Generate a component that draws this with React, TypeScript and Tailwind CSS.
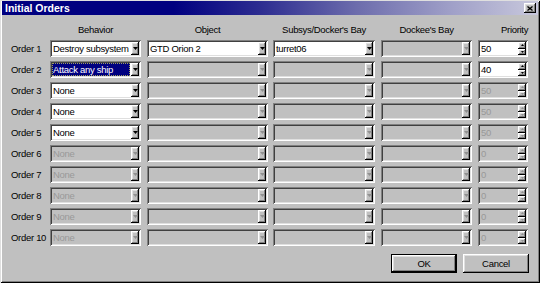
import React from 'react';

// classic 3D bevels
const raised =
  'shadow-[inset_-1px_-1px_#000,inset_1px_1px_#fff,inset_-2px_-2px_#808080,inset_2px_2px_#dfdfdf]';
const sunken =
  'shadow-[inset_1px_1px_#808080,inset_-1px_-1px_#fff,inset_2px_2px_#404040,inset_-2px_-2px_#dfdfdf]';

interface Order {
  behavior: string;
  behaviorOn: boolean;
  object: string;
  objectOn: boolean;
  subsys: string;
  subsysOn: boolean;
  priority: string;
  priorityOn: boolean;
  selected?: boolean;
}

const orders: Order[] = [
  { behavior: 'Destroy subsystem', behaviorOn: true, object: 'GTD Orion 2', objectOn: true, subsys: 'turret06', subsysOn: true, priority: '50', priorityOn: true },
  { behavior: 'Attack any ship', behaviorOn: true, object: '', objectOn: false, subsys: '', subsysOn: false, priority: '40', priorityOn: true, selected: true },
  { behavior: 'None', behaviorOn: true, object: '', objectOn: false, subsys: '', subsysOn: false, priority: '50', priorityOn: false },
  { behavior: 'None', behaviorOn: true, object: '', objectOn: false, subsys: '', subsysOn: false, priority: '50', priorityOn: false },
  { behavior: 'None', behaviorOn: true, object: '', objectOn: false, subsys: '', subsysOn: false, priority: '50', priorityOn: false },
  { behavior: 'None', behaviorOn: false, object: '', objectOn: false, subsys: '', subsysOn: false, priority: '0', priorityOn: false },
  { behavior: 'None', behaviorOn: false, object: '', objectOn: false, subsys: '', subsysOn: false, priority: '0', priorityOn: false },
  { behavior: 'None', behaviorOn: false, object: '', objectOn: false, subsys: '', subsysOn: false, priority: '0', priorityOn: false },
  { behavior: 'None', behaviorOn: false, object: '', objectOn: false, subsys: '', subsysOn: false, priority: '0', priorityOn: false },
  { behavior: 'None', behaviorOn: false, object: '', objectOn: false, subsys: '', subsysOn: false, priority: '0', priorityOn: false },
];

const Arrow: React.FC<{ dir: 'up' | 'down'; on: boolean; size?: number }> = ({ dir, on, size = 5 }) => {
  const h = Math.ceil(size / 2);
  const pts = dir === 'down' ? `0,0 ${size},0 ${size / 2},${h}` : `0,${h} ${size},${h} ${size / 2},0`;
  return (
    <svg width={size} height={h} viewBox={`0 0 ${size} ${h}`} className="block">
      <polygon points={pts} fill={on ? '#000' : '#909090'} />
    </svg>
  );
};

const DropButton: React.FC<{ on: boolean }> = ({ on }) => (
  <div className={`w-[8px] h-full shrink-0 bg-[#c0c0c0] flex items-center justify-center ${raised}`}>
    <Arrow dir="down" on={on} />
  </div>
);

const Combo: React.FC<{ width: string; value: string; on: boolean; selected?: boolean }> = ({
  width,
  value,
  on,
  selected,
}) => (
  <div className={`${width} h-[17px] shrink-0 flex p-[2px] ${on ? 'bg-white' : 'bg-[#c0c0c0]'} ${sunken}`}>
    <div className="flex-1 min-w-0 flex items-center pr-[1px]">
      {selected ? (
        <span className="h-full w-full flex items-center bg-[#000080] text-white pl-[1px] outline-1 outline-dotted outline-[#a0a060] -outline-offset-1">
          {value}
        </span>
      ) : (
        <span className={`pl-[1px] whitespace-nowrap ${on ? 'text-black' : 'text-[#999999]'}`}>{value}</span>
      )}
    </div>
    <DropButton on={on} />
  </div>
);

const Spin: React.FC<{ value: string; on: boolean }> = ({ value, on }) => (
  <div className={`w-[50px] h-[17px] shrink-0 flex p-[2px] ${on ? 'bg-white' : 'bg-[#c0c0c0]'} ${sunken}`}>
    <div className={`flex-1 flex items-center pl-[1px] ${on ? 'text-black' : 'text-[#999999]'}`}>{value}</div>
    <div className="w-[8px] h-full flex flex-col">
      <div className={`flex-1 bg-[#c0c0c0] flex items-center justify-center ${raised}`}>
        <Arrow dir="up" on={on} size={3} />
      </div>
      <div className={`flex-1 bg-[#c0c0c0] flex items-center justify-center ${raised}`}>
        <Arrow dir="down" on={on} size={3} />
      </div>
    </div>
  </div>
);

const DialogButton: React.FC<{ label: string; isDefault?: boolean }> = ({ label, isDefault }) => (
  <div className={`w-[66px] h-[19px] bg-[#c0c0c0] ${isDefault ? 'border border-black' : ''}`}>
    <div className={`w-full h-full flex items-center justify-center ${raised}`}>{label}</div>
  </div>
);

export default function App() {
  return (
    <div
      className={`w-[540px] h-[283px] bg-[#c0c0c0] flex flex-col pt-[1px] px-[2px] text-[9.5px] tracking-[-0.3px] leading-none text-black font-['Liberation_Sans',Arial,sans-serif] shadow-[inset_1px_1px_#dfdfdf,inset_-1px_-1px_#000,inset_2px_2px_#fff,inset_-2px_-2px_#808080]`}
    >
      {/* Title bar */}
      <div className="h-[14px] flex items-center pl-[3px] pr-[2px] bg-[linear-gradient(90deg,#000080_0%,#000080_32%,#2c2c90_48%,#6c6cac_66%,#a0a0c8_84%,#c8c8dc_100%)]">
        <span className="flex-1 text-white font-bold text-[10.5px] tracking-normal">Initial Orders</span>
        <div className={`w-[12px] h-[10px] bg-[#c0c0c0] flex items-center justify-center ${raised}`}>
          <svg width="6" height="5" viewBox="0 0 6 5">
            <path d="M0.5 0.5 L5.5 4.5 M5.5 0.5 L0.5 4.5" stroke="#000" strokeWidth="1.3" />
          </svg>
        </div>
      </div>

      {/* Column headers */}
      <div className="flex h-[12px] mt-[9px] pl-[9px] items-center">
        <div className="w-[39px]" />
        <div className="w-[91px] text-center">Behavior</div>
        <div className="w-[121px] ml-[6px] text-center">Object</div>
        <div className="w-[102px] ml-[5px] text-center">Subsys/Docker's Bay</div>
        <div className="w-[91px] ml-[6px] text-center">Dockee's Bay</div>
        <div className="w-[50px] ml-[6px] pl-[23px] text-left">Priority</div>
      </div>

      {/* Order rows */}
      <div className="flex flex-col gap-[4px] mt-[4px] pl-[9px]">
        {orders.map((o, i) => (
          <div key={i} className="flex items-center h-[17px]">
            <div className="w-[39px]">Order {i + 1}</div>
            <Combo width="w-[91px]" value={o.behavior} on={o.behaviorOn} selected={o.selected} />
            <div className="ml-[6px]">
              <Combo width="w-[121px]" value={o.object} on={o.objectOn} />
            </div>
            <div className="ml-[5px]">
              <Combo width="w-[102px]" value={o.subsys} on={o.subsysOn} />
            </div>
            <div className="ml-[6px]">
              <Combo width="w-[91px]" value="" on={false} />
            </div>
            <div className="ml-[6px]">
              <Spin value={o.priority} on={o.priorityOn} />
            </div>
          </div>
        ))}
      </div>

      {/* Buttons */}
      <div className="flex justify-end gap-[6px] mt-[8px] pr-[9px]">
        <DialogButton label="OK" isDefault />
        <DialogButton label="Cancel" />
      </div>
    </div>
  );
}
